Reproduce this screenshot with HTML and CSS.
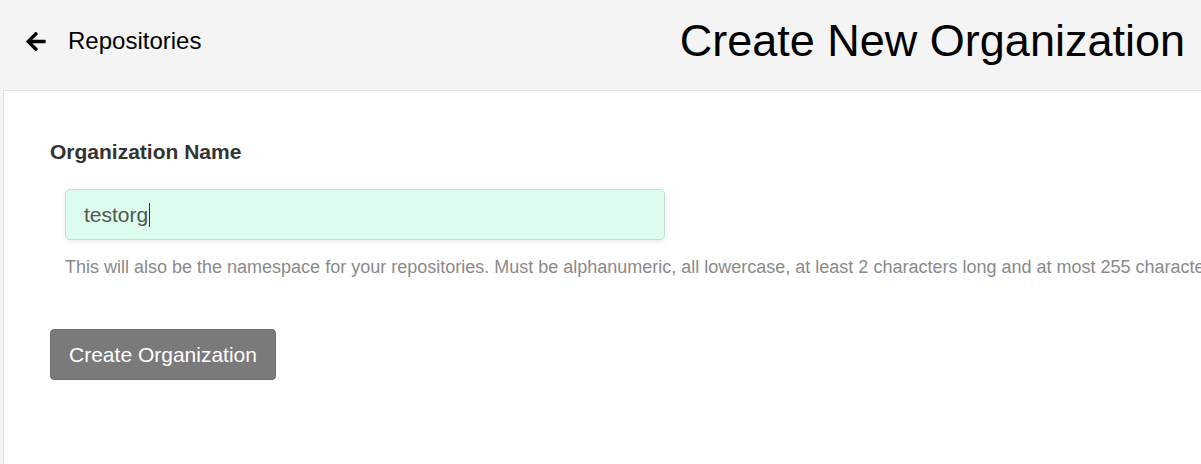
FILE: index.html
```html
<!DOCTYPE html>
<html>
<head>
<meta charset="utf-8">
<link rel="stylesheet" href="styles.css">
</head>
<body>
<header class="topbar">
  <a class="back" href="#">
    <svg class="back-icon" viewBox="0 37 448 438" width="20" height="19" aria-hidden="true"><path d="M257.5 445.1l-22.2 22.2c-9.4 9.4-24.6 9.4-33.9 0L7 273c-9.4-9.4-9.4-24.6 0-33.9L201.4 44.7c9.4-9.4 24.6-9.4 33.9 0l22.2 22.2c9.5 9.5 9.3 25-.4 34.3L136.6 216H424c13.3 0 24 10.7 24 24v32c0 13.3-10.7 24-24 24H136.6l120.5 114.8c9.8 9.3 10 24.8.4 34.3z"/></svg>
    <span class="back-label">Repositories</span>
  </a>
  <h1 class="page-title">Create New Organization</h1>
</header>
<main class="panel">
  <form class="org-form">
    <label class="field-label" for="orgname">Organization Name</label>
    <div class="field">
      <div class="input"><span class="input-value">testorg</span><span class="caret"></span></div>
      <p class="help">This will also be the namespace for your repositories. Must be alphanumeric, all lowercase, at least 2 characters long and at most 255 characters long.</p>
    </div>
    <button class="btn" type="button">Create Organization</button>
  </form>
</main>
</body>
</html>
```

FILE: styles.css
```css
html, body {
  margin: 0;
  padding: 0;
  height: 100%;
  overflow: hidden;
}
body {
  background: #f4f4f4;
  font-family: "Liberation Sans", Arial, sans-serif;
  color: #000;
  display: flex;
  flex-direction: column;
}
.topbar {
  height: 90px;
  box-sizing: border-box;
  flex: none;
  display: flex;
  align-items: center;
  justify-content: space-between;
  padding: 0 16px 9px 26px;
}
.back {
  display: flex;
  align-items: center;
  gap: 22px;
  color: #000;
  text-decoration: none;
  margin-top: 1px;
}
.back-icon {
  display: block;
  fill: #000;
}
.back-label {
  font-size: 24px;
}
.page-title {
  margin: 0;
  font-weight: normal;
  font-size: 45px;
  line-height: 1;
}
.panel {
  flex: 1;
  margin-left: 3px;
  background: #fff;
  border-left: 1px solid #e2e2e2;
  border-top: 1px solid #e2e2e2;
  padding: 49px 0 0 46px;
  white-space: nowrap;
  overflow: hidden;
}
.org-form {
  display: flex;
  flex-direction: column;
  align-items: flex-start;
}
.field-label {
  font-weight: bold;
  font-size: 21px;
  color: #333;
  line-height: 24px;
}
.field {
  margin: 25px 0 0 15px;
}
.input {
  box-sizing: border-box;
  width: 600px;
  height: 51px;
  border: 1px solid #c8dccf;
  border-radius: 5px;
  background: #dcfded;
  box-shadow: 0 2px 6px rgba(0,0,0,0.08);
  display: flex;
  align-items: center;
  padding: 0 18px;
  font-size: 21px;
  color: #555;
}
.caret {
  display: inline-block;
  width: 1px;
  height: 24px;
  background: #333;
  margin-left: 1px;
}
.help {
  margin: 16px 0 0;
  font-size: 18px;
  color: #8a8a8a;
  line-height: 22px;
}
.btn {
  margin-top: 51px;
  box-sizing: border-box;
  width: 226px;
  height: 51px;
  background: #7a7a7a;
  border: 1px solid #6e6e6e;
  border-radius: 4px;
  color: #fff;
  font-family: "Liberation Sans", Arial, sans-serif;
  font-size: 21px;
  padding: 0;
}
```
